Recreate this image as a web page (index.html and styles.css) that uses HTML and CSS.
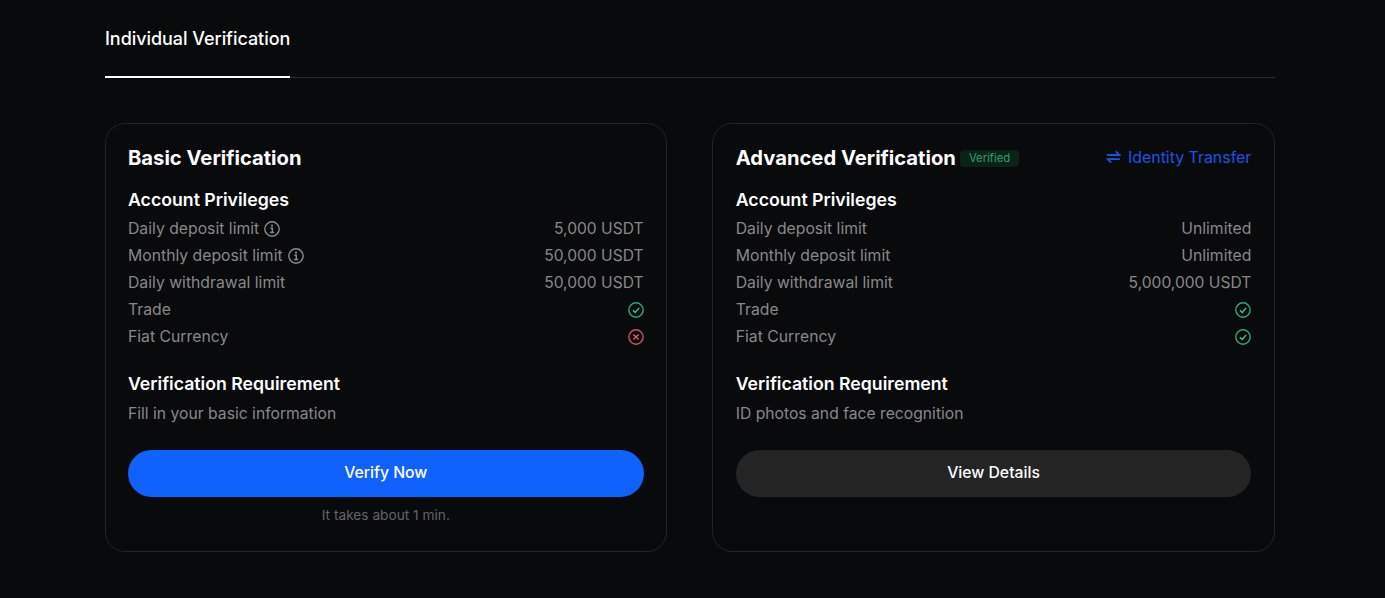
FILE: index.html
```html
<!DOCTYPE html>
<html lang="en">
<head>
<meta charset="utf-8">
<title>Individual Verification</title>
<link rel="stylesheet" href="styles.css">
</head>
<body>
<svg class="defs" width="0" height="0" aria-hidden="true">
  <symbol id="info" viewBox="0 0 16 16"><circle cx="8" cy="8" r="7.2" fill="none" stroke="currentColor" stroke-width="1.4"/><path d="M6.4 7.2H8.3V11.3M6.2 11.5H10" fill="none" stroke="currentColor" stroke-width="1.5"/><circle cx="8" cy="4.7" r="1.1" fill="currentColor"/></symbol>
  <symbol id="yes" viewBox="0 0 16 16"><circle cx="8" cy="8" r="7.2" fill="none" stroke="#2fa777" stroke-width="1.4"/><path d="M4.9 8.2L7.2 10.5L11.1 5.9" fill="none" stroke="#3ecb92" stroke-width="1.4"/></symbol>
  <symbol id="no" viewBox="0 0 16 16"><circle cx="8" cy="8" r="7.2" fill="none" stroke="#c9545f" stroke-width="1.4"/><path d="M5.4 5.4L10.6 10.6M10.6 5.4L5.4 10.6" fill="none" stroke="#d9606b" stroke-width="1.4"/></symbol>
</svg>
<main class="page">
  <nav class="tabs"><span class="tab">Individual Verification</span></nav>
  <div class="cards">
    <section class="card">
      <header class="card-head"><h2>Basic Verification</h2></header>
      <h3>Account Privileges</h3>
      <ul class="rows">
        <li><span class="label">Daily deposit limit <svg class="info"><use href="#info"/></svg></span><span class="num">5,000 USDT</span></li>
        <li><span class="label">Monthly deposit limit <svg class="info"><use href="#info"/></svg></span><span class="num">50,000 USDT</span></li>
        <li><span class="label">Daily withdrawal limit</span><span class="num">50,000 USDT</span></li>
        <li><span class="label">Trade</span><svg class="status"><use href="#yes"/></svg></li>
        <li><span class="label">Fiat Currency</span><svg class="status"><use href="#no"/></svg></li>
      </ul>
      <h3 class="req">Verification Requirement</h3>
      <p class="desc">Fill in your basic information</p>
      <button class="btn primary">Verify Now</button>
      <p class="hint">It takes about 1 min.</p>
    </section>
    <section class="card">
      <header class="card-head">
        <h2>Advanced Verification</h2><span class="badge">Verified</span>
        <a class="transfer" href="#"><svg class="swap" viewBox="0 0 16 14"><path d="M1 4.8H14.2L10.4 1M15 9.2H1.8L5.6 13" fill="none" stroke="currentColor" stroke-width="2"/></svg>Identity Transfer</a>
      </header>
      <h3>Account Privileges</h3>
      <ul class="rows">
        <li><span class="label">Daily deposit limit</span><span>Unlimited</span></li>
        <li><span class="label">Monthly deposit limit</span><span>Unlimited</span></li>
        <li><span class="label">Daily withdrawal limit</span><span class="num">5,000,000 USDT</span></li>
        <li><span class="label">Trade</span><svg class="status"><use href="#yes"/></svg></li>
        <li><span class="label">Fiat Currency</span><svg class="status"><use href="#yes"/></svg></li>
      </ul>
      <h3 class="req">Verification Requirement</h3>
      <p class="desc">ID photos and face recognition</p>
      <button class="btn dark">View Details</button>
    </section>
  </div>
</main>
</body>
</html>
```
FILE: styles.css
```css
* { box-sizing: border-box; }
html, body { margin: 0; height: 100%; }
body { background: #090a0c; color: #fff; font-family: Inter, "Liberation Sans", sans-serif; overflow: hidden; }
.defs { position: absolute; }
.page { width: 1170.5px; margin: 0 0 0 104.5px; }
.tabs { height: 78px; border-bottom: 1px solid #2a2b2d; display: flex; }
.tab { height: 78px; width: 185.5px; border-bottom: 2px solid #fff; padding: 28px 0 0 0.5px; font-size: 18px; line-height: 22px; font-weight: 500; white-space: nowrap; letter-spacing: -0.05px; }
.cards { display: flex; gap: 45px; margin-top: 45px; }
.card { flex: 1; height: 429px; border: 1px solid #232427; border-radius: 20px; padding: 21px 22.7px 0 22.5px; }
.card-head { display: flex; align-items: center; height: 26px; }
h2 { margin: 0; font-size: 20.2px; line-height: 26px; font-weight: 700; }
h3 { margin: 17px 0 0; font-size: 17.7px; line-height: 24px; font-weight: 600; }
.rows { list-style: none; margin: 3px 0 0; padding: 0; font-size: 15.75px; color: #888; }
.rows li { height: 27px; display: flex; justify-content: space-between; align-items: center; }
.num { font-size: 15.6px; }
.label { display: flex; align-items: center; gap: 5px; }
.info { width: 16px; height: 16px; color: #8a8a8a; }
.status { width: 16px; height: 16px; }
.req { margin-top: 22px; }
.desc { margin: 6px 0 0; font-size: 15.7px; line-height: 24px; color: #888; }
.btn { display: block; width: 100%; height: 47px; margin-top: 24px; padding: 0 0 2px; border: 0; border-radius: 24px; color: #fff; font: 500 15.75px/45px Inter, "Liberation Sans", sans-serif; }
.primary { background: #0f62fe; }
.dark { background: #242424; }
.hint { margin: 9px 0 0; text-align: center; font-size: 13.7px; line-height: 18px; color: #636467; }
.badge { margin-left: 4px; height: 17px; padding: 0 9px; border-radius: 4px; background: #0c2118; color: #26a168; font-size: 11.3px; line-height: 17px; }
.transfer { margin-left: auto; margin-top: -2px; display: flex; align-items: center; gap: 7px; color: #1a55e0; font-size: 15.9px; text-decoration: none; }
.swap { width: 15px; height: 14px; }
```
